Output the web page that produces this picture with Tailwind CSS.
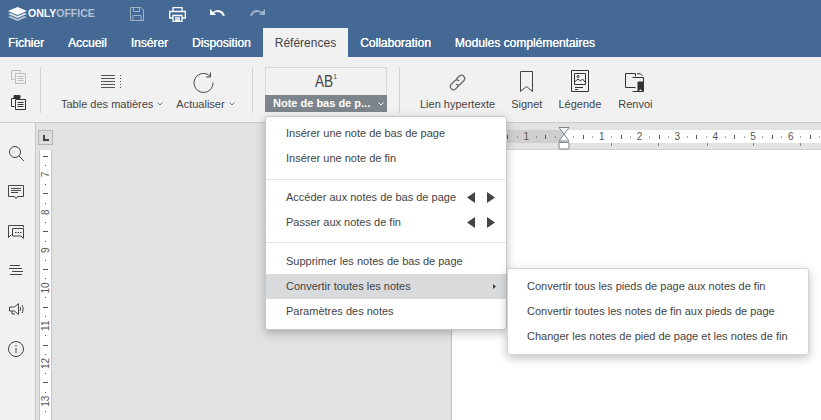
<!DOCTYPE html>
<html lang="fr">
<head>
  <meta charset="UTF-8" />
  <title>ONLYOFFICE</title>
  <script src="https://cdn.jsdelivr.net/npm/@tailwindcss/browser@4"></script>
</head>
<body class="w-[821px] h-[420px] overflow-hidden relative bg-[#e2e2e2] font-['Liberation_Sans',Arial,sans-serif] text-[11px] text-[#444]">

  <!-- Title bar -->
  <header class="h-[28px] bg-[#446995] flex items-center pl-[8px] text-white">
    <svg class="w-[19px] h-[14px]" viewBox="0 0 19 14" fill="#fff">
      <path d="M9.500 0 19 4 9.500 8 0 4z"/>
      <path d="M2.600 6 9.500 8.900 16.400 6 19 7 9.500 11 0 7z" opacity=".8"/>
      <path d="M2.600 9 9.500 11.900 16.400 9 19 10 9.500 14 0 10z" opacity=".6"/>
    </svg>
    <span class="ml-[1px] w-[102px] text-[10.5px] font-bold">ONLY<span class="text-white/60">OFFICE</span></span>
    <svg class="w-[14px] h-[14px] opacity-50" viewBox="0 0 14 14" fill="none" stroke="#fff"><path d="M.5.5h10.500l2.500 2.500v10.500H.5zM3.500.5v4h6v-4M3 13.500v-5h8v5"/></svg>
    <svg class="ml-[25px] w-[17px] h-[15px]" viewBox="0 0 17 15" fill="none" stroke="#fff" stroke-width="1.300"><path d="M4 4V.7h9V4M4 11H.7V4.500h15.600V11H13"/><path d="M4 8.500h9v5.800H4zM6 11h5M6 13h5"/></svg>
    <svg class="ml-[24px] w-[15px] h-[10px]" viewBox="0 0 15 10" fill="#fff"><path d="M0 0v6h6L4 4c3-2 7-1.500 9 3l2-.5C13 1 8-1 3 3z"/></svg>
    <svg class="ml-[25px] w-[15px] h-[10px] opacity-50" viewBox="0 0 15 10" fill="#fff"><path d="M15 0v6H9l2-2C8 2 4 2.500 2 7L0 6.500C2 1 7-1 12 3z"/></svg>
  </header>

  <!-- Tabs -->
  <nav class="h-[29px] bg-[#446995] flex items-center pl-[8px] gap-[24px] text-[12px] text-white [text-shadow:0.2px_0_0_#fff]">
    <span>Fichier</span>
    <span>Accueil</span>
    <span>Insérer</span>
    <span>Disposition</span>
    <span class="h-full flex items-center px-[12px] -mx-[12px] bg-[#f1f1f1] text-[#444] [text-shadow:none]">Références</span>
    <span>Collaboration</span>
    <span>Modules complémentaires</span>
  </nav>

  <!-- Toolbar -->
  <section class="h-[66px] bg-[#f1f1f1] border-b border-[#cbcbcb] flex items-start pt-[10px]">
    <div class="w-[41px] h-[46px] flex flex-col items-center gap-[11px] pr-[3px] pt-[3px] border-r border-[#d2d2d2]">
      <svg class="w-[15px] h-[14px] opacity-30" viewBox="0 0 15 14" fill="none" stroke="#444"><path d="M.5.5h9v2M.5.500v9h3"/><path d="M4.500 3.500h10v10h-10zM6.500 6.500h6M6.500 8.500h6M6.500 10.500h6"/></svg>
      <svg class="w-[15px] h-[15px]" viewBox="0 0 15 15" fill="none" stroke="#333"><path d="M3.500 3.500H.5v8h3"/><path d="M3 .5h6v3H3z" fill="#333"/><path d="M4.500 4.500h10v10h-10zM6.500 7.500h6M6.500 9.500h6M6.500 11.500h6"/></svg>
    </div>

    <div class="w-[212px] h-[46px] relative border-r border-[#d2d2d2]">
      <svg class="absolute left-[60px] top-[8px] w-[21px] h-[13px]" viewBox="0 0 21 13" stroke="#555"><path d="M0 .5h14M0 3.500h14M0 6.500h14M0 9.500h14M0 12.500h14"/><path d="M19.500 0v13" stroke-dasharray="1 2"/></svg>
      <svg class="absolute left-[152px] top-[5px] w-[21px] h-[21px]" viewBox="0 0 21 21" fill="none" stroke="#444"><path d="M17.500 4.500A9.500 9.500 0 1 0 20 10.500"/><path d="M17.500 .5v4.500h-4.500"/></svg>
      <div class="absolute left-[20px] top-[30px] flex items-center leading-[14px]">
        <span>Table des matières</span>
        <svg class="ml-[4px] w-[6px] h-[4px]" viewBox="0 0 6 4" fill="none" stroke="#777"><path d="M.5.5 3 3 5.500.5"/></svg>
        <span class="ml-[13px]">Actualiser</span>
        <svg class="ml-[4px] w-[6px] h-[4px]" viewBox="0 0 6 4" fill="none" stroke="#777"><path d="M.5.5 3 3 5.500.5"/></svg>
      </div>
    </div>

    <div class="ml-[12px] w-[122px] h-[45px] flex flex-col border border-[#d8d8d8]">
      <div class="flex-1 flex items-start justify-center pt-[5px] text-[16px] leading-[17px] text-[#444] scale-x-[.85]">AB<span class="-mt-[1px] text-[8px] leading-[9px]">1</span></div>
      <div class="h-[17px] -mx-[1px] -mb-[1px] bg-[#7d858c] flex items-center pl-[8px] text-white font-bold">
        <span>Note de bas de p...</span>
        <svg class="ml-[8px] w-[6px] h-[4px]" viewBox="0 0 6 4" fill="none" stroke="#fff"><path d="M.5.5 3 3 5.500.5"/></svg>
      </div>
    </div>

    <div class="ml-[12px] h-[46px] border-l border-[#d2d2d2] flex pl-[20px] gap-[16px]">
      <div class="flex flex-col items-center justify-between">
        <svg class="mt-[6px] w-[19px] h-[19px]" viewBox="0 0 19 19" fill="none" stroke="#666" stroke-width="1.200"><path d="M8 6.500 11.500 3a3.200 3.200 0 0 1 4.500 4.500L12.500 11a3.200 3.200 0 0 1-4.500 0"/><path d="M11 12.500 7.500 16A3.200 3.200 0 0 1 3 11.500L6.500 8a3.200 3.200 0 0 1 4.500 0"/></svg>
        <span class="leading-[14px] mb-[2px]">Lien hypertexte</span>
      </div>
      <div class="flex flex-col items-center justify-between">
        <svg class="mt-[4px] w-[13px] h-[21px]" viewBox="0 0 13 21" fill="none" stroke="#444"><path d="M.5.5h12v20l-6-5-6 5z"/></svg>
        <span class="leading-[14px] mb-[2px]">Signet</span>
      </div>
      <div class="flex flex-col items-center justify-between">
        <svg class="mt-[3px] w-[18px] h-[22px]" viewBox="0 0 18 22" fill="none" stroke="#333"><path d="M.5.5h17v21H.5z"/><path d="M3.500 3.500h11v11h-11z"/><path d="m3.500 12 3.500-3 2.500 2 2-2 2.500 3"/><circle cx="7" cy="6.500" r="1"/><path d="M4 17.500h8M4 19.500h3"/></svg>
        <span class="leading-[14px] mb-[2px]">Légende</span>
      </div>
      <div class="ml-[1px] flex flex-col items-center justify-between">
        <svg class="mt-[6px] w-[20px] h-[19px]" viewBox="0 0 20 19" fill="none" stroke="#333"><path d="M10.500 14.500H.5V.5h10v3"/><path d="M7.500 4.500h11v14H7.500"/><path d="M12 .8h3.500l2 2" /><path d="M13 9h5v9l-2.500-2-2.500 2z" fill="#333"/></svg>
        <span class="leading-[14px] mb-[2px]">Renvoi</span>
      </div>
    </div>
  </section>

  <!-- Work area -->
  <main class="h-[297px] flex">
    <aside class="w-[36px] bg-[#f1f1f1] border-r border-[#c8c8c8] grid auto-rows-[39px] justify-items-center items-center content-start pt-[11px] pr-[3px]">
      <svg class="w-[15px] h-[15px]" viewBox="0 0 15 15" fill="none" stroke="#444"><circle cx="6" cy="6" r="5.500"/><path d="m10 10 5 5"/></svg>
      <svg class="w-[16px] h-[15px]" viewBox="0 0 16 15" fill="none" stroke="#444"><path d="M.5.5h15v11h-6l-1.500 2-1.500-2h-6z"/><path d="M3 3.500h10M3 5.500h10M3 7.500h7"/></svg>
      <svg class="w-[16px] h-[14px]" viewBox="0 0 16 14" fill="none" stroke="#444"><path d="M15.500 2.500V.5H.5v12l3-3"/><path d="M4.500 3.500h11v10L13 11H4.500z"/><path d="M7 7.500h1.500M9.500 7.500H11M12 7.500h1.500"/></svg>
      <svg class="w-[14px] h-[12px]" viewBox="0 0 14 12" stroke="#444"><path d="M1 .5h10M0 3.500h13M3 6.500h11M1 9.500h12"/></svg>
      <svg class="w-[15px] h-[15px]" viewBox="0 0 15 15" fill="none" stroke="#444"><path d="M.5 5h5l4-3.500v11l-4-3.500h-5zM3 9v3h3"/><path d="M11 5c.8 1 .8 3 0 4M13 3c1.500 2 1.500 6 0 8"/></svg>
      <svg class="w-[16px] h-[16px]" viewBox="0 0 16 16" fill="none" stroke="#444"><circle cx="8" cy="8" r="7.500"/><path d="M8 7v5M8 4v1.500"/></svg>
    </aside>

    <!-- Vertical ruler column -->
    <div class="w-[415px] relative bg-[#e2e2e2]">
      <div class="absolute left-[2px] top-[7px] w-[15px] h-[15px] bg-[#dcdcdc] border border-[#b5b5b5] flex items-center justify-center">
        <span class="w-[6px] h-[6px] border-l-2 border-b-2 border-[#444]"></span>
      </div>
      <svg id="vruler" class="absolute left-[3px] top-[27px] w-[13px] h-[270px] bg-white border-x border-[#c8c8c8]" viewBox="0 0 11 270"></svg>
    </div>

    <!-- Page with top ruler -->
    <div class="flex-1 flex flex-col">
      <div class="h-[27px] relative bg-[#e2e2e2] border-b border-[#d2d2d2]">
        <svg id="hruler" class="absolute left-0 top-[7px] w-[370px] h-[20px]" viewBox="0 0 370 20"></svg>
        <svg class="absolute left-[107px] top-[4px] w-[12px] h-[23px]" viewBox="0 0 12 23" fill="#fff" stroke="#7d858c"><path d="M1 .5h10L6 7zM6 7l5 7H1z"/><path d="M1 15.500h10V21a1 1 0 0 1-1 1H2a1 1 0 0 1-1-1z"/></svg>
      </div>
      <div class="flex-1 bg-white border-l border-[#c0c0c0]"></div>
    </div>
  </main>

  <!-- Footnote menu -->
  <div class="absolute left-[265px] top-[116px] w-[242px] h-[214px] py-[4px] bg-white border border-[#c8c8c8] rounded-[3px] shadow-[0_3px_10px_rgba(0,0,0,0.25)] text-[#444]">
    <div class="h-[25px] flex items-center pl-[20px]">Insérer une note de bas de page</div>
    <div class="h-[25px] flex items-center pl-[20px]">Insérer une note de fin</div>
    <div class="mt-[8px] mb-[5px] border-t border-[#e2e2e2]"></div>
    <div class="h-[25px] flex items-center justify-between pl-[20px] pr-[11px]">
      <span>Accéder aux notes de bas de page</span>
      <span class="flex gap-[12px]">
        <svg class="w-[8px] h-[11px]" viewBox="0 0 8 11" fill="#444"><path d="M8 0v11L0 5.500z"/></svg>
        <svg class="w-[8px] h-[11px]" viewBox="0 0 8 11" fill="#444"><path d="M0 0v11l8-5.500z"/></svg>
      </span>
    </div>
    <div class="h-[25px] flex items-center justify-between pl-[20px] pr-[11px]">
      <span>Passer aux notes de fin</span>
      <span class="flex gap-[12px]">
        <svg class="w-[8px] h-[11px]" viewBox="0 0 8 11" fill="#444"><path d="M8 0v11L0 5.500z"/></svg>
        <svg class="w-[8px] h-[11px]" viewBox="0 0 8 11" fill="#444"><path d="M0 0v11l8-5.500z"/></svg>
      </span>
    </div>
    <div class="mt-[7px] mb-[6px] border-t border-[#e2e2e2]"></div>
    <div class="h-[25px] flex items-center pl-[20px]">Supprimer les notes de bas de page</div>
    <div class="h-[25px] flex items-center justify-between pl-[20px] pr-[10px] bg-[#d8dadc]">
      <span>Convertir toutes les notes</span>
      <svg class="w-[3px] h-[5px]" viewBox="0 0 3 5" fill="#444"><path d="M0 0v5l3-2.500z"/></svg>
    </div>
    <div class="h-[25px] flex items-center pl-[20px]">Paramètres des notes</div>
  </div>

  <!-- Convert submenu -->
  <div class="absolute left-[507px] top-[268px] w-[302px] h-[87px] py-[5px] bg-white border border-[#d4d4d4] rounded-[3px] shadow-[0_3px_10px_rgba(0,0,0,0.25)] text-[#444]">
    <div class="h-[25px] flex items-center pl-[19px]">Convertir tous les pieds de page aux notes de fin</div>
    <div class="h-[25px] flex items-center pl-[19px]">Convertir toutes les notes de fin aux pieds de page</div>
    <div class="h-[25px] flex items-center pl-[19px]">Changer les notes de pied de page et les notes de fin</div>
  </div>

  <script>
    // ruler marks, 37.8px per unit
    const unit = 37.8
    let v = ''
    for (let i = -1; i < 7; i++) {
      const y = 24.5 + i * unit
      if (i >= 0) v += `<text transform="translate(9 ${y}) rotate(-90)" font-size="10" text-anchor="middle" fill="#555">${i + 7}</text>`
      for (const [d, w] of [[unit * .25, 1], [unit * .5, 5], [unit * .75, 1]]) {
        v += `<rect x="${5.5 - w / 2}" y="${Math.round(y + d)}" width="${w}" height="1" fill="#555"/>`
      }
    }
    document.getElementById('vruler').innerHTML = v

    let h = '<rect x="0" y="0" width="370" height="13" fill="#fff"/><rect x="0" y="0" width="113" height="13" fill="#cfcfcf"/>'
    const zero = 113
    for (let i = -2; i < 7; i++) {
      const x = zero + i * unit
      if (i !== 0) h += `<text x="${x}" y="10" font-size="10" text-anchor="middle" fill="#555">${Math.abs(i)}</text>`
      for (const [d, t] of [[unit * .25, 1], [unit * .5, 4], [unit * .75, 1]]) {
        h += `<rect x="${Math.round(x + d)}" y="${7 - t / 2}" width="1" height="${t}" fill="#555"/>`
      }
    }
    for (const x of [611, 658, 707, 753, 800]) {
      h += `<rect x="${x - 451}" y="13" width="1" height="3" fill="#888"/>`
    }
    document.getElementById('hruler').innerHTML = h
  </script>
</body>
</html>
